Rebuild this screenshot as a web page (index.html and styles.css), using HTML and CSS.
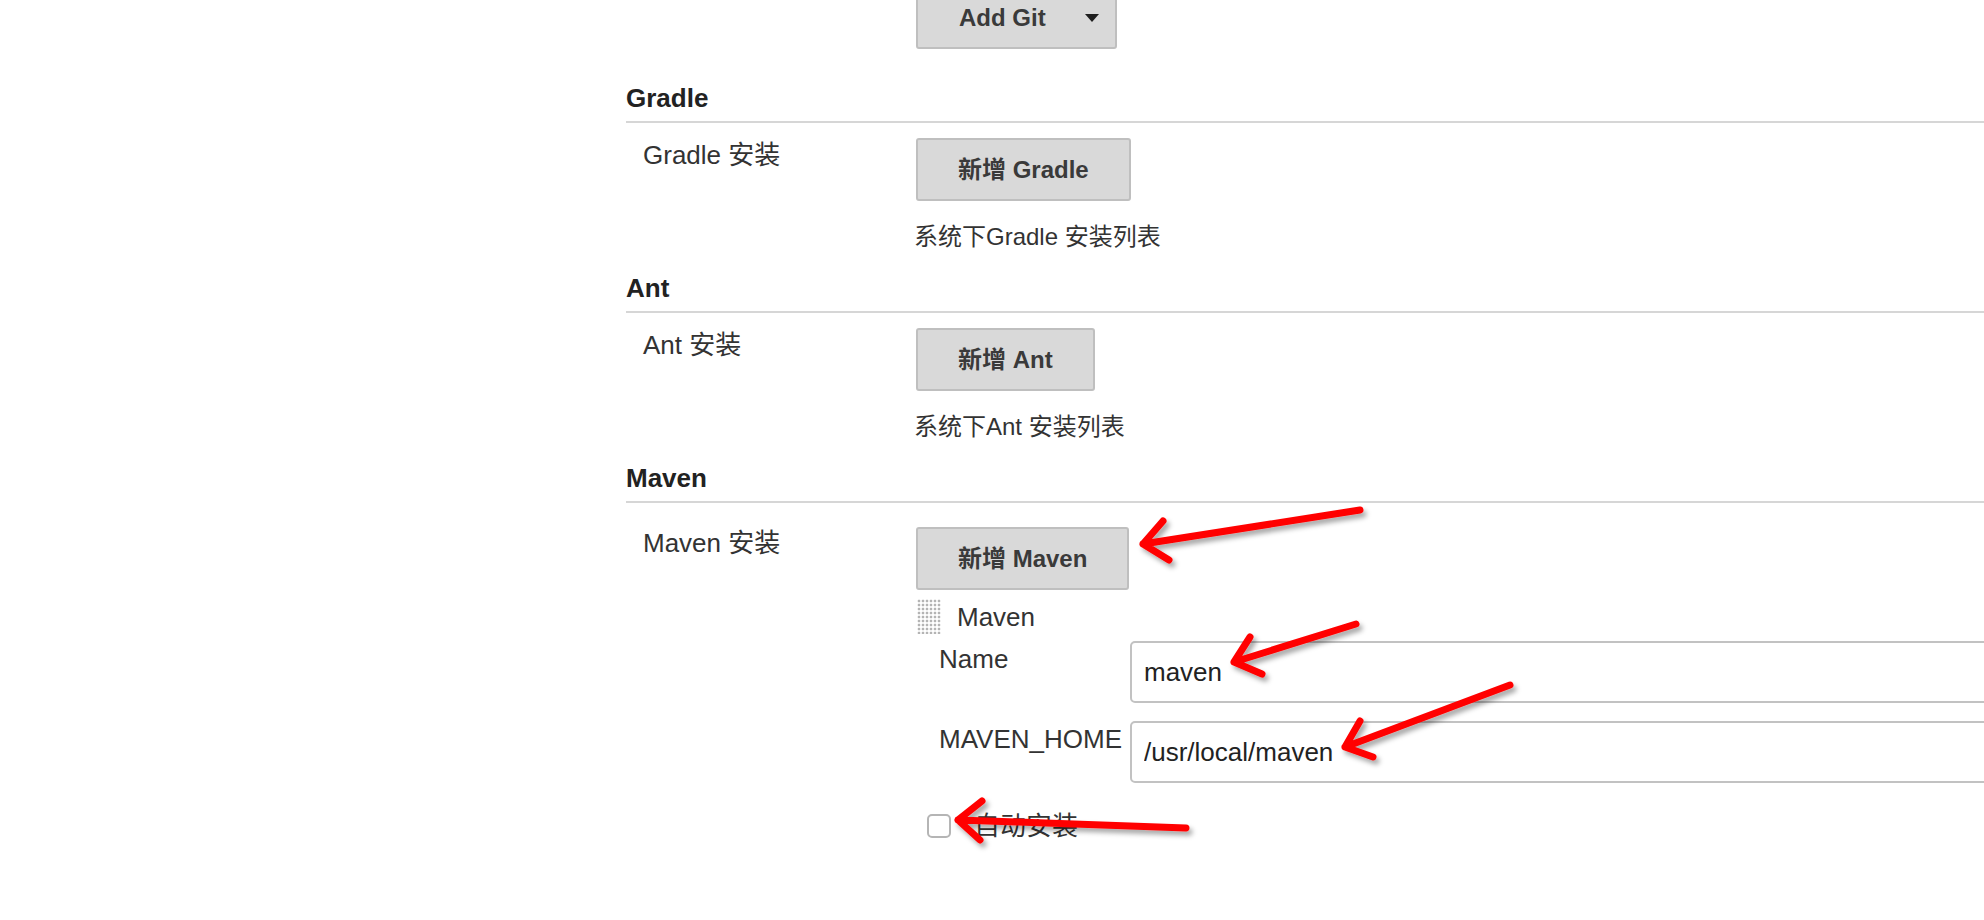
FILE: index.html
```html
<!DOCTYPE html>
<html lang="zh-CN">
<head>
<meta charset="utf-8">
<title>Global Tool Configuration</title>
<link rel="stylesheet" href="styles.css">
</head>
<body>
<div class="page">
  <div class="top-row">
    <button class="btn btn-drop">Add Git<span class="caret"></span></button>
  </div>

  <section class="section">
    <h3 class="section-head">Gradle</h3>
    <div class="row">
      <div class="label">Gradle 安装</div>
      <div class="field">
        <button class="btn">新增 Gradle</button>
        <div class="hint">系统下Gradle 安装列表</div>
      </div>
    </div>
  </section>

  <section class="section">
    <h3 class="section-head">Ant</h3>
    <div class="row">
      <div class="label">Ant 安装</div>
      <div class="field">
        <button class="btn">新增 Ant</button>
        <div class="hint">系统下Ant 安装列表</div>
      </div>
    </div>
  </section>

  <section class="section">
    <h3 class="section-head">Maven</h3>
    <div class="row row-maven">
      <div class="label">Maven 安装</div>
      <div class="field">
        <button class="btn">新增 Maven</button>
        <div class="item">
          <div class="item-head"><span class="handle"></span><span class="item-title">Maven</span></div>
          <div class="item-row">
            <div class="item-label">Name</div>
            <input class="text-input" type="text" value="maven">
          </div>
          <div class="item-row item-row-2">
            <div class="item-label">MAVEN_HOME</div>
            <input class="text-input" type="text" value="/usr/local/maven">
          </div>
          <label class="check"><span class="box"></span><span class="check-text">自动安装</span></label>
        </div>
      </div>
    </div>
  </section>
</div>

<svg class="annot" width="1984" height="920" viewBox="0 0 1984 920">
  <defs>
    <filter id="sh" x="-20%" y="-50%" width="140%" height="200%">
      <feDropShadow dx="3" dy="4" stdDeviation="2.5" flood-color="#000" flood-opacity="0.35"/>
    </filter>
  </defs>
  <g fill="none" stroke="#ff0000" stroke-width="7" stroke-linecap="round" stroke-linejoin="round" filter="url(#sh)">
    <path d="M1360 510 L1143 544 M1169 560 L1143 544 L1163 521"/>
    <path d="M1356 624 L1234 662 M1262 674 L1234 662 L1250 637"/>
    <path d="M1510 685 L1345 747 M1373 757 L1345 747 L1360 721"/>
    <path d="M1186 828 L958 820 M980 840 L958 820 L982 801"/>
  </g>
</svg>
</body>
</html>
```
FILE: styles.css
```css
html, body {
  margin: 0;
  padding: 0;
  background: #fff;
  overflow: hidden;
}
body {
  font-family: "Liberation Sans", "Noto Sans CJK SC", sans-serif;
  color: #333;
  width: 1984px;
  height: 920px;
  position: relative;
}
.page {
  padding-left: 626px;
}
.top-row {
  padding-left: 290px;
  margin-top: -14px;
}
.btn {
  display: inline-flex;
  align-items: center;
  box-sizing: border-box;
  height: 63px;
  padding: 0 40px;
  font-family: "Liberation Sans", "Noto Sans CJK SC", sans-serif;
  font-size: 24px;
  font-weight: bold;
  line-height: 27px;
  color: #3a3a3a;
  background: #d9d9d9;
  border: 2px solid #bfbfbf;
  border-radius: 3px;
  cursor: pointer;
}
.btn-drop {
  width: 201px;
  padding: 0 16px 0 41px;
  justify-content: space-between;
}
.caret {
  width: 0;
  height: 0;
  border-left: 7.5px solid transparent;
  border-right: 7.5px solid transparent;
  border-top: 8px solid #1e1e1e;
}
.section-head {
  margin: 34px 0 0;
  font-size: 26px;
  line-height: 30px;
  font-weight: bold;
  color: #222;
  padding-bottom: 8px;
  border-bottom: 2px solid #d6d6d6;
}
.section + .section .section-head {
  margin-top: 0;
}
.row {
  display: grid;
  grid-template-columns: 290px 1fr;
  padding: 15px 0 21px;
}
.label {
  padding-left: 17px;
  padding-top: 2px;
  font-size: 26px;
  line-height: 30px;
  color: #333;
}
.field {
  display: flex;
  flex-direction: column;
  align-items: flex-start;
}
.hint {
  margin-top: 21px;
  margin-left: -2px;
  font-size: 24px;
  line-height: 30px;
  color: #333;
}
.row-maven {
  padding-top: 24px;
}
.row-maven .label {
  padding-top: 1px;
}
.item {
  align-self: stretch;
  margin-top: 9px;
}
.item-head {
  display: flex;
  align-items: center;
  height: 35px;
}
.handle {
  width: 24px;
  height: 35px;
  margin-left: 1px;
  background-image: radial-gradient(circle, #b4b4b4 1.1px, transparent 1.7px);
  background-size: 4px 4px;
}
.item-title {
  margin-left: 16px;
  font-size: 26px;
  line-height: 30px;
  color: #333;
}
.item-row {
  display: grid;
  grid-template-columns: 214px 1fr;
  margin-top: 7px;
}
.item-row-2 {
  margin-top: 18px;
}
.item-label {
  padding-left: 23px;
  padding-top: 3px;
  font-size: 26px;
  line-height: 30px;
  color: #333;
  white-space: nowrap;
}
.text-input {
  box-sizing: border-box;
  width: 1000px;
  height: 62px;
  padding: 0 12px;
  font-family: "Liberation Sans", "Noto Sans CJK SC", sans-serif;
  font-size: 26px;
  color: #222;
  background: #fff;
  border: 2px solid #c2c2c2;
  border-radius: 5px;
  outline: none;
}
.check {
  display: flex;
  align-items: center;
  margin-top: 28px;
  margin-left: 11px;
}
.box {
  box-sizing: border-box;
  width: 24px;
  height: 24px;
  border: 2px solid #b5b5b5;
  border-radius: 5px;
  background: #fff;
}
.check-text {
  margin-left: 23px;
  font-size: 26px;
  line-height: 30px;
  color: #333;
}
.annot {
  position: absolute;
  left: 0;
  top: 0;
  pointer-events: none;
}
```
